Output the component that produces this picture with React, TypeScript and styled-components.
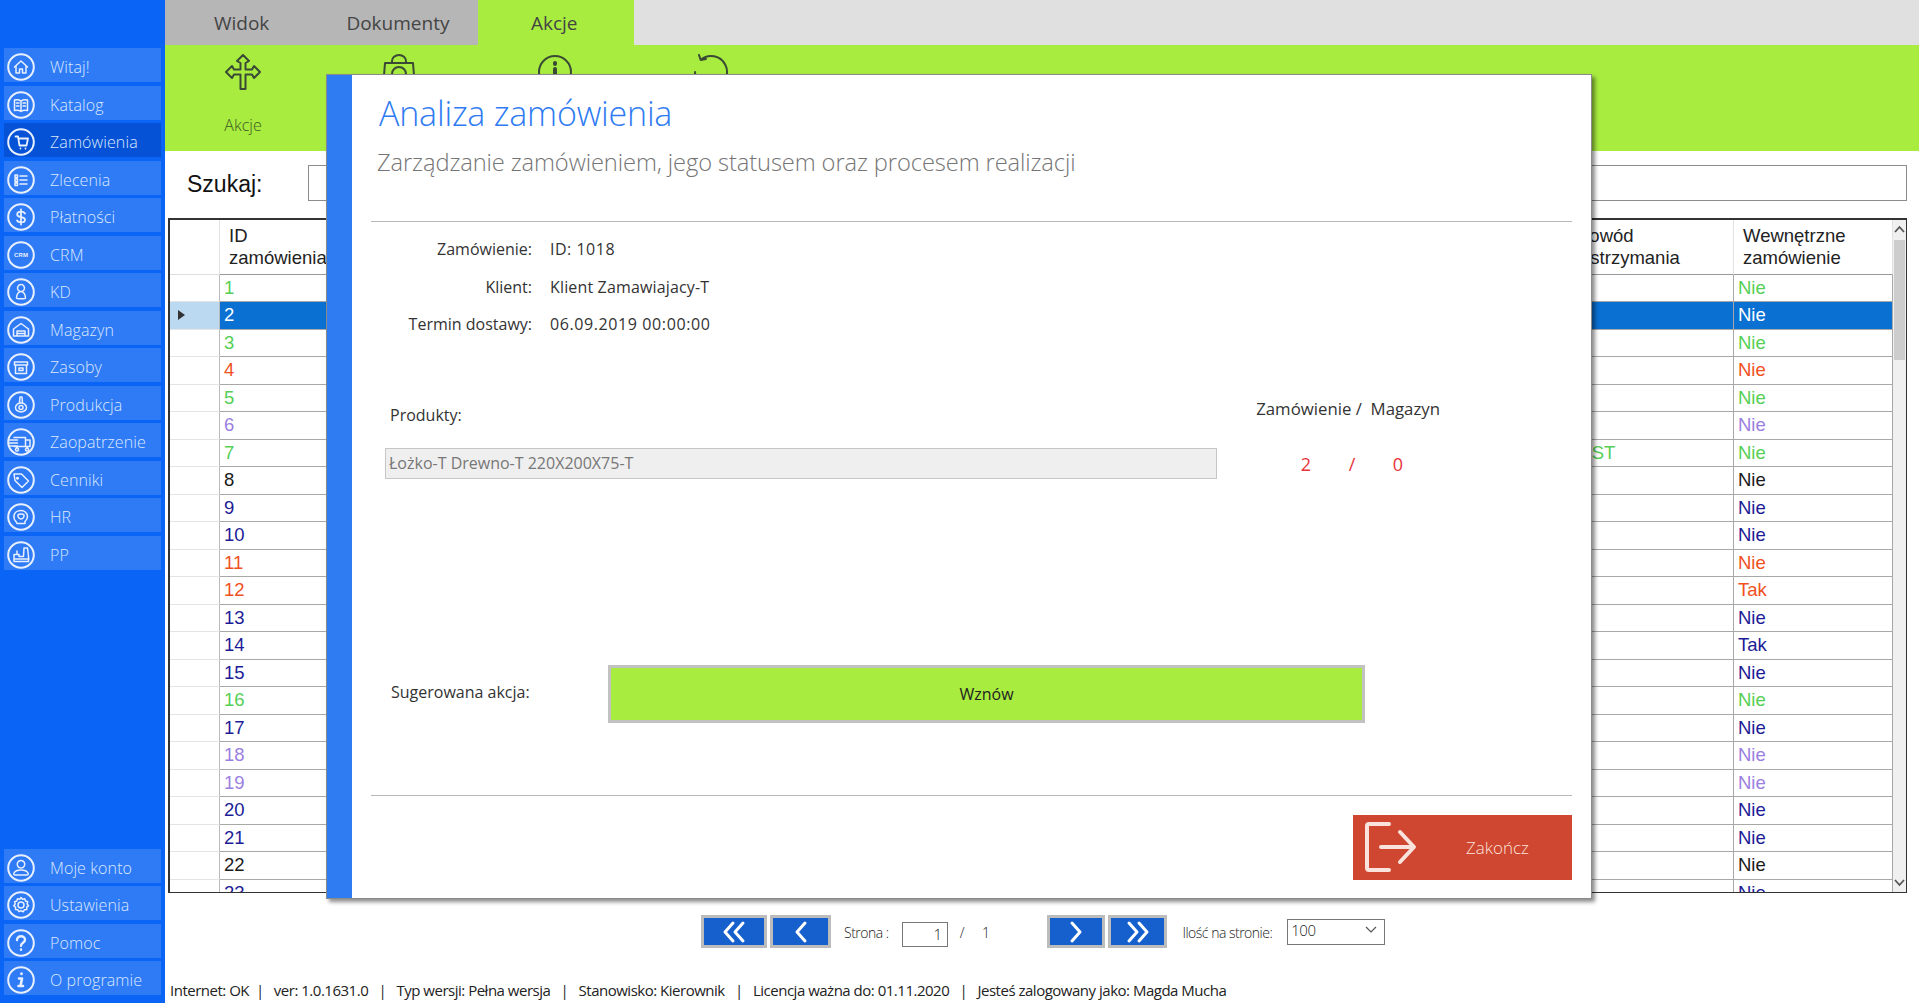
import styled, { createGlobalStyle } from 'styled-components';
import type { ReactNode } from 'react';

const GlobalStyle = createGlobalStyle`
    html, body {
        margin: 0;
        padding: 0;
        height: 100%;
        background: #fff;
        overflow: hidden;
    }
`;

const ui = '"Open Sans", "Noto Sans", sans-serif';
const grid = '"Liberation Sans", Arial, sans-serif';

const Page = styled.div`
    position: relative;
    width: 1919px;
    height: 1003px;
    display: flex;
    overflow: hidden;
    font-family: ${ui};
`;

// Sidebar.

const Sidebar = styled.nav`
    width: 165px;
    flex: none;
    background: #0a64f5;
    display: flex;
    flex-direction: column;
    justify-content: space-between;
    padding: 48px 4px 8px;
    box-sizing: border-box;
`;

const NavGroup = styled.div`
    display: flex;
    flex-direction: column;
    gap: 3.5px;
`;

const NavItem = styled.div<{ $active?: boolean }>`
    height: 34px;
    box-sizing: border-box;
    display: flex;
    align-items: center;
    gap: 15px;
    padding: 4px 0 0 3px;
    background: ${(p) => (p.$active ? '#0552d6' : '#2f7bf6')};
    color: #dbe8fd;
    font-size: 16px;
    font-weight: 300;
    letter-spacing: 0.1px;
    white-space: nowrap;
`;

const NavIcon = styled.svg`
    width: 28px;
    height: 28px;
    flex: none;
    fill: none;
    stroke: #e8f0fe;
    stroke-width: 1.5;
    stroke-linecap: round;
    stroke-linejoin: round;
`;

const icon = (inner: ReactNode) => (
    <NavIcon viewBox="0 0 28 28">
        <circle cx="14" cy="14" r="12.8" strokeWidth="2" />
        {inner}
    </NavIcon>
);

const navTop: [string, ReactNode, boolean?][] = [
    ['Witaj!', <path d="M7.5 14 14 8l6.5 6M9 13v7h3.5v-4h3v4H19v-7" />],
    ['Katalog', <path d="M14 10c-2-1.500-4.500-1.500-6.500-1v10.500c2-.5 4.500-.5 6.500 1 2-1.500 4.500-1.500 6.500-1V9c-2-.5-4.500-.5-6.500 1zM14 10v10.500M9.500 12h2.500M9.500 15h2.500M16 12h2.500M16 15h2.500" />],
    ['Zamówienia', <path d="M8.500 8.500H11l1.500 9h7l1.500-7H11.500M13.500 20.500v.1M18.500 20.500v.1" strokeWidth="1.800" />, true],
    ['Zlecenia', <path d="M8 9h2.500v2.500H8zM8 13h2.500v2.500H8zM8 17h2.500v2.500H8zM13 10h7M13 14h7M13 18h7" />],
    ['Płatności', <path d="M18 10.500c-.8-1.300-2.300-1.800-4-1.800-2.200 0-3.800 1-3.800 2.700 0 3.800 7.800 1.600 7.800 5.300 0 1.700-1.700 2.700-4 2.700-1.800 0-3.300-.6-4-1.900M14 6.500v15" strokeWidth="1.800" />],
    ['CRM', <text x="14" y="16.200" textAnchor="middle" fontSize="6" fontWeight="700" fill="#e8f0fe" stroke="none" fontFamily={grid}>CRM</text>],
    ['KD', <path d="M14 6.500a3.500 3.500 0 1 0 .01 0zM9.500 20c0-3.500 2-6.500 4.500-6.500s4.500 3 4.500 6.500c0 1-9 1-9 0z" />],
];

const navMid: [string, ReactNode, boolean?][] = [
    ['Magazyn', <path d="M6.500 13 14 7.500l7.500 5.500v7h-15zM10 20v-5h8v5M10 17.500h8" />],
    ['Zasoby', <path d="M7.500 9h13v3h-13zM8.500 12v8.500h11V12M12 15h4v2.500h-4z" />],
    ['Produkcja', <path d="M13 6h2l.5 6h-3zM8.500 16.500c0-2.500 2.500-4.500 5.500-4.500s5.500 2 5.500 4.500-2.500 4.500-5.500 4.500-5.500-2-5.500-4.500zM12 16.500a2 2 0 1 0 4 0 2 2 0 1 0-4 0z" />],
    ['Zaopatrzenie', <path d="M7 9.500h11.500v9H7M18.500 12H23v6.500h-4.500M2.500 12h8M2.500 15h8M2.500 18h8M10 20a1.500 1.500 0 1 0 .01 0M20 20a1.500 1.500 0 1 0 .01 0" />],
    ['Cenniki', <path d="M7 8h7.500l7 7-6.500 6.500-7-7zM10.500 11.500a.8.8 0 1 0 .01 0" />],
    ['HR', <path d="M9 18.500c-1.500-1.500-2.500-3.300-2-6 .5-3 3.500-5 7-5s6.500 2.500 6.500 6c0 2-1 3.500-2.500 5v2H10zM11 12c1-1.500 5-1.500 6 0 .5 1.500-1 4-3 4s-3.500-2.500-3-4z" />],
    ['PP', <path d="M7 20.500v-7h5v2h4.500l.5-8.500h3.500l1 8.500v5zM10 13v-3M7 18h15" />],
];

const navBottom: [string, ReactNode][] = [
    ['Moje konto', <path d="M14 6.500a3.800 3.800 0 1 0 .01 0zM8 21c-1.500 0-1.500-1-1-2 1-2 3.500-3 7-3s6 1 7 3c.5 1 .5 2-1 2z" />],
    ['Ustawienia', <path d="M14 6.500l1.500 1.800 2.300-.5.700 2.200 2.200.8-.6 2.200 1.400 1.800-1.800 1.400.1 2.300-2.300.2-1.200 2-2.300-1-2 1-1.200-2-2.300-.2.100-2.300-1.800-1.400 1.400-1.800-.6-2.200 2.200-.8.7-2.200 2.300.5zM11 14a3 3 0 1 0 6 0 3 3 0 1 0-6 0z" />],
    ['Pomoc', <path d="M10 11c0-2.500 2-3.800 4-3.800s4 1.300 4 3.500c0 3-4 3-4 6M14 20.500v.2" strokeWidth="2.400" />],
    ['O programie', <path d="M14.500 7.500v.5M12 12.500h3l-1.500 7.500H16M11.500 20h3" strokeWidth="2.600" />],
];

// Main column.

const Main = styled.main`
    flex: 1;
    min-width: 0;
    display: flex;
    flex-direction: column;
`;

const TabBar = styled.div`
    height: 45px;
    flex: none;
    display: flex;
    background: #e0e0e0;
`;

const Tab = styled.div<{ $active?: boolean }>`
    width: 156.300px;
    box-sizing: border-box;
    padding-right: 3px;
    display: flex;
    align-items: center;
    justify-content: center;
    font-size: 19px;
    color: #444;
    background: ${(p) => (p.$active ? '#a8ec40' : '#b6b6b6')};
`;

const Ribbon = styled.div`
    height: 106px;
    flex: none;
    background: #a8ec40;
    display: flex;
`;

const RibbonAction = styled.div`
    width: 156px;
    display: flex;
    flex-direction: column;
    align-items: center;
    padding-top: 9px;
    font-size: 16px;
    font-weight: 300;
    color: #3f5a22;
`;

const RibbonLabel = styled.span`
    margin-top: 24px;
`;

const RibbonIcon = styled.svg`
    width: 36px;
    height: 36px;
    fill: none;
    stroke: #3a4a34;
    stroke-width: 2;
    stroke-linejoin: round;
    stroke-linecap: round;
`;

const SearchRow = styled.div`
    height: 67px;
    flex: none;
    display: flex;
    align-items: center;
    padding: 0 12px 0 22px;
    gap: 46px;
`;

const SearchLabel = styled.label`
    font-family: ${grid};
    font-size: 23px;
    color: #111;
    width: 75px;
`;

const SearchInput = styled.div`
    flex: 1;
    height: 34px;
    border: 1.5px solid #8c8c8c;
    margin-top: -3px;
`;

// Grid.

const GridBox = styled.div`
    height: 675px;
    flex: none;
    margin: 0 12px 0 3px;
    border: 2px solid #333;
    border-right-width: 1px;
    border-bottom-width: 1.5px;
    box-sizing: border-box;
    display: flex;
    overflow: hidden;
`;

const GridBody = styled.div`
    flex: 1;
    min-width: 0;
    overflow: hidden;
    font-family: ${grid};
    font-size: 18.500px;
`;

const GridRow = styled.div`
    display: grid;
    grid-template-columns: 50px 1344px 170px 1fr;
    height: 27.500px;
    box-sizing: border-box;
`;

const HeaderRow = styled(GridRow)`
    height: 54.500px;
    color: #222;
    line-height: 22px;
`;

const HeaderCell = styled.div<{ $pad?: number }>`
    border-right: 1px solid #e2e2e2;
    border-bottom: 1px solid #999;
    padding: 5px 0 0 ${(p) => p.$pad ?? 9}px;
    white-space: pre-line;
    overflow: hidden;
`;

const HeadCorner = styled.div`
    border-right: 1px solid #e2e2e2;
    border-bottom: 1px solid #ddd;
`;

const RowMarker = styled.div<{ $current?: boolean }>`
    background: ${(p) => (p.$current ? '#bcd9f2' : '#fff')};
    border-right: 1px solid #bbb;
    border-bottom: 1px solid #e4e4e4;
    display: flex;
    align-items: center;
    padding-left: 8px;
`;

const Triangle = styled.span`
    width: 0;
    height: 0;
    border-left: 7px solid #333;
    border-top: 5.500px solid transparent;
    border-bottom: 5.500px solid transparent;
`;

const Cell = styled.div<{ $color: string; $selected?: boolean }>`
    border-right: 1px solid #a8a8a8;
    border-bottom: 1px solid #a8a8a8;
    padding-left: 4px;
    line-height: 26px;
    color: ${(p) => (p.$selected ? '#fff' : p.$color)};
    background: ${(p) => (p.$selected ? '#0a70d2' : '#fff')};
    overflow: hidden;
    white-space: nowrap;
`;

const Scrollbar = styled.div`
    width: 13px;
    flex: none;
    background: #f0f0f0;
    display: flex;
    flex-direction: column;
    align-items: center;
`;

const ScrollThumb = styled.div`
    width: 11px;
    height: 120px;
    background: #cdcdcd;
    margin-bottom: auto;
`;

const ScrollArrow = styled.svg`
    width: 13px;
    height: 20px;
    flex: none;
    fill: none;
    stroke: #555;
    stroke-width: 1.800;
`;

// Pager and status.

const Pager = styled.div`
    height: 77px;
    flex: none;
    display: flex;
    align-items: center;
    padding-left: 536px;
    font-size: 14px;
    font-weight: 300;
    color: #222;
    letter-spacing: -0.5px;
`;

const PageButton = styled.div<{ $width: number }>`
    width: ${(p) => p.$width}px;
    height: 33px;
    box-sizing: border-box;
    background: #1560cc;
    border: 3px solid #bcbcbc;
    margin-right: 3px;
    display: flex;
    align-items: center;
    justify-content: center;
`;

const PageGlyph = styled.svg`
    width: 30px;
    height: 24px;
    fill: none;
    stroke: #fff;
    stroke-width: 3;
    stroke-linecap: round;
    stroke-linejoin: round;
`;

const PageInput = styled.div`
    width: 46px;
    height: 25px;
    margin-top: 5px;
    box-sizing: border-box;
    border: 1px solid #777;
    text-align: right;
    padding-right: 5px;
    line-height: 23px;
    font-size: 15px;
`;

const PageSelect = styled.div`
    width: 98px;
    height: 26px;
    box-sizing: border-box;
    border: 1px solid #777;
    display: flex;
    align-items: center;
    justify-content: space-between;
    padding: 0 7px 3px 3px;
    font-size: 15px;
    margin-left: 15px;
`;

const PagerText = styled.span<{ $left: number; $right?: number }>`
    margin-left: ${(p) => p.$left}px;
    margin-right: ${(p) => p.$right ?? 0}px;
    margin-top: 2px;
    white-space: nowrap;
`;

const StatusBar = styled.div`
    flex: 1;
    display: flex;
    align-items: center;
    padding: 7px 0 0 5px;
    font-size: 15px;
    font-weight: 400;
    color: #222;
    letter-spacing: -0.49px;
    white-space: pre;
`;

// Modal.

const Modal = styled.section`
    position: absolute;
    left: 326px;
    top: 74px;
    width: 1266px;
    height: 825px;
    background: #fff;
    border: 1px solid #8a8a8a;
    box-sizing: border-box;
    box-shadow: 3px 3px 4px rgba(0, 0, 0, 0.45);
    display: flex;
`;

const ModalStrip = styled.div`
    width: 25px;
    flex: none;
    background: #2f7bf2;
`;

const ModalBody = styled.div`
    flex: 1;
    display: flex;
    flex-direction: column;
    padding: 0 19px 19px 19px;
    color: #333;
`;

const Title = styled.h1`
    margin: 16px 0 0 8px;
    font-size: 34px;
    line-height: 44px;
    font-weight: 300;
    color: #2f7bf2;
    letter-spacing: -0.2px;
`;

const Subtitle = styled.h2`
    margin: 12px 0 0 6px;
    font-size: 23.700px;
    line-height: 30px;
    font-weight: 300;
    color: #757575;
    letter-spacing: -0.1px;
`;

const Rule = styled.hr`
    width: 100%;
    height: 1px;
    flex: none;
    border: none;
    background: #b8b8b8;
    margin: 0;
`;

const TopRule = styled(Rule)`
    margin-top: 44px;
`;

const Facts = styled.dl`
    margin: 8.500px 0 0;
    display: grid;
    grid-template-columns: 161px 1fr;
    column-gap: 18px;
    grid-auto-rows: 37.500px;
    align-items: center;
    font-size: 16px;
`;

const FactLabel = styled.dt`
    text-align: right;
`;

const FactValue = styled.dd<{ $spacing?: number }>`
    margin: 0;
    letter-spacing: ${(p) => p.$spacing ?? 0.15}px;
`;

const ProductHead = styled.div`
    margin: 61px 0 0 19px;
    display: flex;
    justify-content: space-between;
    font-size: 16px;
    line-height: 22px;
    width: 1050px;
`;

const StockHead = styled.span`
    margin-top: -6px;
    white-space: pre;
    font-size: 16.800px;
`;

const ProductRow = styled.div`
    margin: 22px 0 0 14px;
    display: flex;
    align-items: center;
`;

const ProductField = styled.div`
    width: 832px;
    height: 31px;
    box-sizing: border-box;
    border: 1px solid #c6c6c6;
    background: #efefef;
    color: #777;
    font-size: 16px;
    line-height: 28px;
    padding-left: 3px;
`;

const StockCounts = styled.div`
    margin-left: 66px;
    display: grid;
    grid-template-columns: repeat(3, 46px);
    justify-items: center;
    color: #e8323c;
    font-size: 18px;
`;

const ActionRow = styled.div`
    margin: 186px 0 0 20px;
    display: flex;
    align-items: center;
    font-size: 16px;
`;

const ActionLabel = styled.span`
    width: 217px;
    margin-top: -4px;
`;

const WznowButton = styled.button`
    width: 757px;
    height: 58px;
    box-sizing: border-box;
    background: #a8ec40;
    border: 3px solid #c2c2c2;
    font-family: ${ui};
    font-size: 16px;
    color: #222;
`;

const BottomRule = styled(Rule)`
    margin-top: 72px;
`;

const CloseButton = styled.button`
    align-self: flex-end;
    margin-top: 18.500px;
    width: 219px;
    height: 65px;
    flex: none;
    border: none;
    padding: 0 0 0 10px;
    background: #cf4730;
    color: #fbe3dd;
    font-family: ${ui};
    font-size: 17px;
    font-weight: 300;
    display: flex;
    align-items: center;
    gap: 49px;
`;

const CloseIcon = styled.svg`
    width: 54px;
    height: 54px;
    flex: none;
    fill: none;
    stroke: #fbe3dd;
    stroke-width: 4;
    stroke-linecap: round;
    stroke-linejoin: round;
`;

const green = '#55cf55';
const red = '#f0501e';
const violet = '#9a80e0';
const navy = '#1c1c96';
const black = '#1a1a1a';

const rows: [string, string, string?][] = [
    ['1', green], ['2', green], ['3', green], ['4', red], ['5', green], ['6', violet],
    ['7', green], ['8', black], ['9', navy], ['10', navy], ['11', red], ['12', red, 'Tak'],
    ['13', navy], ['14', navy, 'Tak'], ['15', navy], ['16', green], ['17', navy], ['18', violet],
    ['19', violet], ['20', navy], ['21', navy], ['22', black], ['23', navy],
];

export default function App() {
    return (
        <Page>
            <GlobalStyle />
            <Sidebar>
                <NavGroup>
                    {[...navTop, ...navMid].map(([label, glyph, active]) => (
                        <NavItem key={label} $active={active}>{icon(glyph)}{label}</NavItem>
                    ))}
                </NavGroup>
                <NavGroup>
                    {navBottom.map(([label, glyph]) => (
                        <NavItem key={label}>{icon(glyph)}{label}</NavItem>
                    ))}
                </NavGroup>
            </Sidebar>

            <Main>
                <TabBar>
                    <Tab>Widok</Tab>
                    <Tab>Dokumenty</Tab>
                    <Tab $active>Akcje</Tab>
                </TabBar>
                <Ribbon>
                    <RibbonAction>
                        <RibbonIcon viewBox="0 0 36 36">
                            <path d="M18 1l6 6-3.500 2v6.500H27l2-3.500 6 6-6 6-2-3.500h-6.500V35h-5V20.500H9L7 24l-6-6 6-6 2 3.500h6.500V9L12 7z" />
                        </RibbonIcon>
                        <RibbonLabel>Akcje</RibbonLabel>
                    </RibbonAction>
                    <RibbonAction>
                        <RibbonIcon viewBox="0 0 36 36">
                            <path d="M4 9h28l2 25H2zM11 9V7a7 6 0 0 1 14 0v2" />
                            <circle cx="18" cy="20" r="7" />
                        </RibbonIcon>
                    </RibbonAction>
                    <RibbonAction>
                        <RibbonIcon viewBox="0 0 36 36">
                            <circle cx="18" cy="18" r="16" />
                            <path d="M18 9v1M18 15v9" strokeWidth="4" />
                        </RibbonIcon>
                    </RibbonAction>
                    <RibbonAction>
                        <RibbonIcon viewBox="0 0 36 36">
                            <path d="M7.700 5.700A16 16 0 1 1 2 18M6 1l1.700 5 5.300-1" />
                        </RibbonIcon>
                    </RibbonAction>
                </Ribbon>

                <SearchRow>
                    <SearchLabel>Szukaj:</SearchLabel>
                    <SearchInput />
                </SearchRow>

                <GridBox>
                    <GridBody>
                        <HeaderRow>
                            <HeadCorner />
                            <HeaderCell>{'ID\nzamówienia'}</HeaderCell>
                            <HeaderCell $pad={13}>{'Powód\nwstrzymania'}</HeaderCell>
                            <HeaderCell>{'Wewnętrzne\nzamówienie'}</HeaderCell>
                        </HeaderRow>
                        {rows.map(([id, color, internal]) => {
                            const selected = id === '2';
                            return (
                                <GridRow key={id}>
                                    <RowMarker $current={selected}>{selected && <Triangle />}</RowMarker>
                                    <Cell $color={color} $selected={selected}>{id}</Cell>
                                    <Cell $color={color} $selected={selected}>{id === '7' ? 'TEST' : ''}</Cell>
                                    <Cell $color={color} $selected={selected}>{internal ?? 'Nie'}</Cell>
                                </GridRow>
                            );
                        })}
                    </GridBody>
                    <Scrollbar>
                        <ScrollArrow viewBox="0 0 13 20"><path d="M2 12l4.500-5 4.500 5" /></ScrollArrow>
                        <ScrollThumb />
                        <ScrollArrow viewBox="0 0 13 20"><path d="M2 8l4.500 5 4.500-5" /></ScrollArrow>
                    </Scrollbar>
                </GridBox>

                <Pager>
                    <PageButton $width={66}>
                        <PageGlyph viewBox="0 0 30 24"><path d="M14 3l-8 9 8 9M24 3l-8 9 8 9" /></PageGlyph>
                    </PageButton>
                    <PageButton $width={61}>
                        <PageGlyph viewBox="0 0 30 24"><path d="M19 3l-8 9 8 9" /></PageGlyph>
                    </PageButton>
                    <PagerText $left={10} $right={13}>Strona :</PagerText>
                    <PageInput>1</PageInput>
                    <PagerText $left={12}>/</PagerText>
                    <PagerText $left={18} $right={58}>1</PagerText>
                    <PageButton $width={58}>
                        <PageGlyph viewBox="0 0 30 24"><path d="M11 3l8 9-8 9" /></PageGlyph>
                    </PageButton>
                    <PageButton $width={59}>
                        <PageGlyph viewBox="0 0 30 24"><path d="M6 3l8 9-8 9M16 3l8 9-8 9" /></PageGlyph>
                    </PageButton>
                    <PagerText $left={12}>Ilość na stronie:</PagerText>
                    <PageSelect>
                        100
                        <svg width="12" height="8" viewBox="0 0 12 8" fill="none" stroke="#555" strokeWidth="1.200">
                            <path d="M1 1l5 5 5-5" />
                        </svg>
                    </PageSelect>
                </Pager>

                <StatusBar>
                    {'Internet: OK  |   ver: 1.0.1631.0   |   Typ wersji: Pełna wersja   |   Stanowisko: Kierownik   |   Licencja ważna do: 01.11.2020   |   Jesteś zalogowany jako: Magda Mucha'}
                </StatusBar>
            </Main>

            <Modal>
                <ModalStrip />
                <ModalBody>
                    <Title>Analiza zamówienia</Title>
                    <Subtitle>Zarządzanie zamówieniem, jego statusem oraz procesem realizacji</Subtitle>
                    <TopRule />
                    <Facts>
                        <FactLabel>Zamówienie:</FactLabel>
                        <FactValue $spacing={0.5}>ID: 1018</FactValue>
                        <FactLabel>Klient:</FactLabel>
                        <FactValue>Klient Zamawiajacy-T</FactValue>
                        <FactLabel>Termin dostawy:</FactLabel>
                        <FactValue $spacing={0.6}>06.09.2019 00:00:00</FactValue>
                    </Facts>
                    <ProductHead>
                        <span>Produkty:</span>
                        <StockHead>{'Zamówienie /  Magazyn'}</StockHead>
                    </ProductHead>
                    <ProductRow>
                        <ProductField>Łożko-T Drewno-T 220X200X75-T</ProductField>
                        <StockCounts>
                            <span>2</span>
                            <span>/</span>
                            <span>0</span>
                        </StockCounts>
                    </ProductRow>
                    <ActionRow>
                        <ActionLabel>Sugerowana akcja:</ActionLabel>
                        <WznowButton>Wznów</WznowButton>
                    </ActionRow>
                    <BottomRule />
                    <CloseButton>
                        <CloseIcon viewBox="0 0 54 54">
                            <path d="M26 4H6a2 2 0 0 0-2 2v42a2 2 0 0 0 2 2h20M18 27h32M37 12l14 15-14 15" />
                        </CloseIcon>
                        Zakończ
                    </CloseButton>
                </ModalBody>
            </Modal>
        </Page>
    );
}
